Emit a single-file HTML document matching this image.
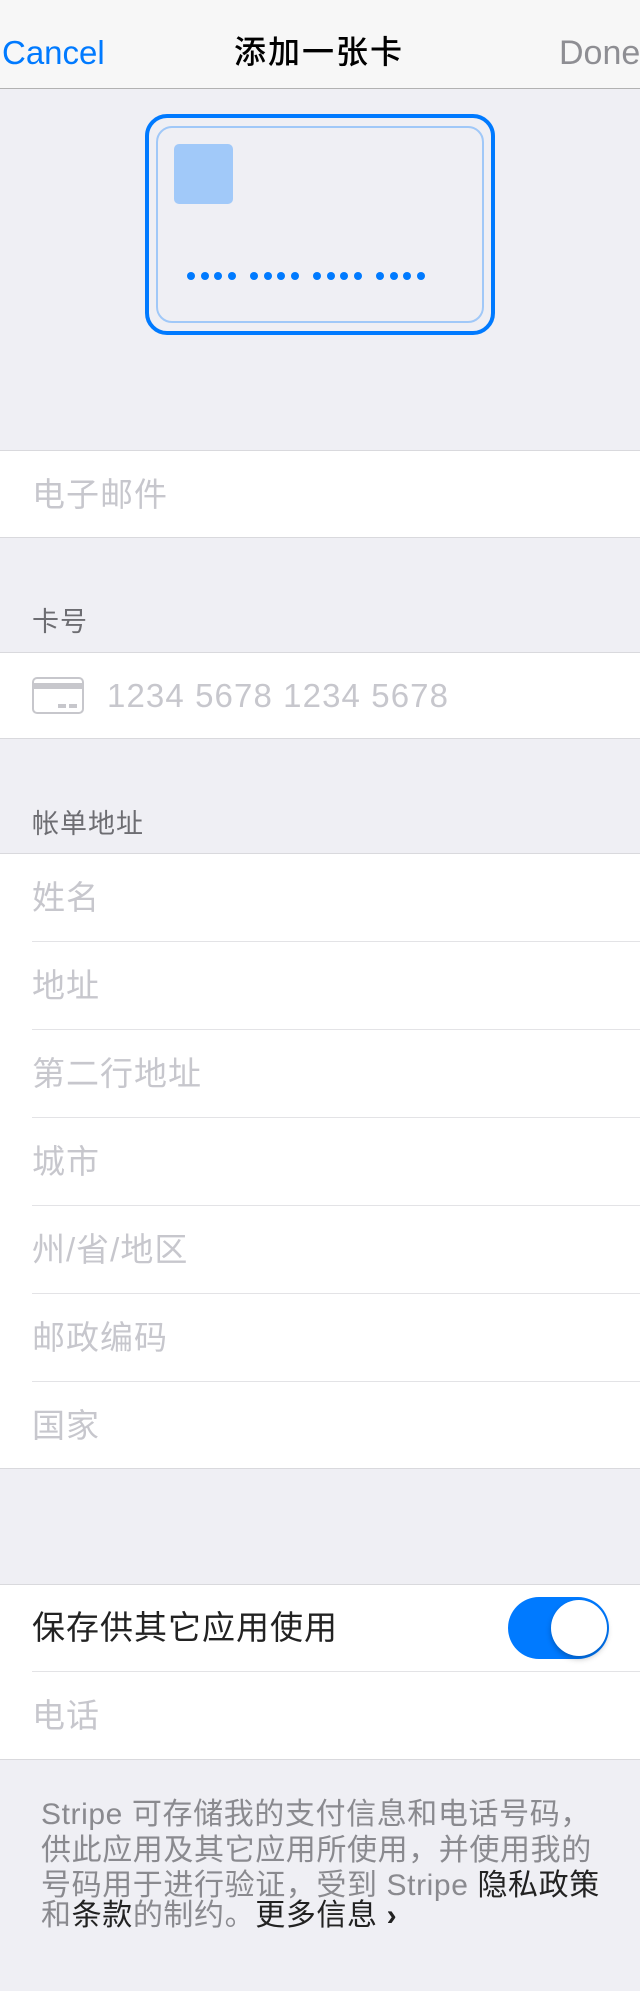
<!DOCTYPE html>
<html><head><meta charset="utf-8"><style>
*{margin:0;padding:0;box-sizing:border-box}
body{width:640px;height:1991px;background:#efeff4;font-family:"Liberation Sans","Noto Sans CJK SC",sans-serif;position:relative;overflow:hidden}
.abs{position:absolute}
.nav{left:0;top:0;width:640px;height:89px;background:#f7f7f7;border-bottom:1px solid #b2b2b2}
.row{position:absolute;left:0;width:640px;background:#fff}
.ph{position:absolute;left:32px;font-size:33px;letter-spacing:1px;color:#c7c7cd;line-height:1}
.sep{position:absolute;left:32px;right:0;height:1px;background:#e3e3e6}
.bt{position:absolute;left:0;width:640px;height:1px;background:#d9d9dd}
.hdr{position:absolute;left:32px;font-size:27px;color:#6d6d72;line-height:1;letter-spacing:1px}
.dot{display:inline-block;width:8px;height:8px;border-radius:50%;background:#007aff;margin-right:5.5px}
.grp{display:inline-block;margin-right:9px}
</style></head><body>
<div class="abs nav"></div>
<div class="abs" style="left:2px;top:36px;font-size:33px;color:#007aff;line-height:1">Cancel</div>
<div class="abs" style="left:234px;top:36px;font-size:32px;color:#000;line-height:1;font-weight:500;letter-spacing:2px">添加一张卡</div>
<div class="abs" style="left:559px;top:36px;font-size:34px;color:#8e8e93;line-height:1;white-space:nowrap">Done</div>

<div class="abs" style="left:145px;top:114px;width:350px;height:221px;border:4px solid #007aff;border-radius:22px"></div>
<div class="abs" style="left:156px;top:126px;width:328px;height:197px;border:2px solid #a0c8f8;border-radius:16px"></div>
<div class="abs" style="left:174px;top:144px;width:59px;height:60px;background:#a1c9f9;border-radius:5px"></div>
<div class="abs" style="left:187px;top:272px;white-space:nowrap;line-height:0">
<span class="grp"><i class="dot"></i><i class="dot"></i><i class="dot"></i><i class="dot"></i></span><span class="grp"><i class="dot"></i><i class="dot"></i><i class="dot"></i><i class="dot"></i></span><span class="grp"><i class="dot"></i><i class="dot"></i><i class="dot"></i><i class="dot"></i></span><span class="grp"><i class="dot"></i><i class="dot"></i><i class="dot"></i><i class="dot"></i></span>
</div>

<div class="row" style="top:450px;height:88px"></div>
<div class="bt" style="top:450px"></div><div class="bt" style="top:537px"></div>
<div class="ph" style="top:478px">电子邮件</div>

<div class="hdr" style="top:609px">卡号</div>
<div class="row" style="top:652px;height:87px"></div>
<div class="bt" style="top:652px"></div><div class="bt" style="top:738px"></div>
<svg class="abs" style="left:32px;top:677px" width="52" height="37" viewBox="0 0 52 37"><rect x="1" y="1" width="50" height="35" rx="4" fill="none" stroke="#c7c7cc" stroke-width="2"/><rect x="1" y="6" width="50" height="6" fill="#c7c7cc"/><rect x="26" y="27" width="8" height="4" fill="#c7c7cc"/><rect x="37" y="27" width="8" height="4" fill="#c7c7cc"/></svg>
<div class="ph" style="left:107px;top:679px;font-size:33px;letter-spacing:1.1px">1234 5678 1234 5678</div>

<div class="hdr" style="top:811px">帐单地址</div>
<div class="row" style="top:853px;height:616px"></div>
<div class="bt" style="top:853px"></div><div class="bt" style="top:1468px"></div>
<div class="ph" style="top:881px">姓名</div>
<div class="sep" style="top:941px"></div>
<div class="ph" style="top:969px">地址</div>
<div class="sep" style="top:1029px"></div>
<div class="ph" style="top:1057px">第二行地址</div>
<div class="sep" style="top:1117px"></div>
<div class="ph" style="top:1145px">城市</div>
<div class="sep" style="top:1205px"></div>
<div class="ph" style="top:1233px">州/省/地区</div>
<div class="sep" style="top:1293px"></div>
<div class="ph" style="top:1321px">邮政编码</div>
<div class="sep" style="top:1381px"></div>
<div class="ph" style="top:1409px">国家</div>

<div class="row" style="top:1584px;height:175px"></div>
<div class="bt" style="top:1584px"></div><div class="bt" style="top:1759px"></div>
<div class="ph" style="top:1611px;color:#222">保存供其它应用使用</div>
<div class="abs" style="left:508px;top:1597px;width:101px;height:62px;border-radius:31px;background:#007aff"></div>
<div class="abs" style="left:551px;top:1600px;width:56px;height:56px;border-radius:50%;background:#fff;box-shadow:0 3px 6px rgba(0,0,0,0.25)"></div>
<div class="sep" style="top:1671px"></div>
<div class="ph" style="top:1699px">电话</div>

<div class="abs" style="left:41px;top:1797px;width:600px;font-size:30px;letter-spacing:0.6px;line-height:35.5px;color:#8a8a8f;white-space:nowrap">
Stripe 可存储我的支付信息和电话号码，<br>供此应用及其它应用所使用，并使用我的<br>号码用于进行验证，受到 Stripe <span style="color:#222">隐私政策</span><br><span style="position:relative;top:-6px">和<span style="color:#222">条款</span>的制约。<span style="color:#222">更多信息 <b>›</b></span></span>
</div>
</body></html>
